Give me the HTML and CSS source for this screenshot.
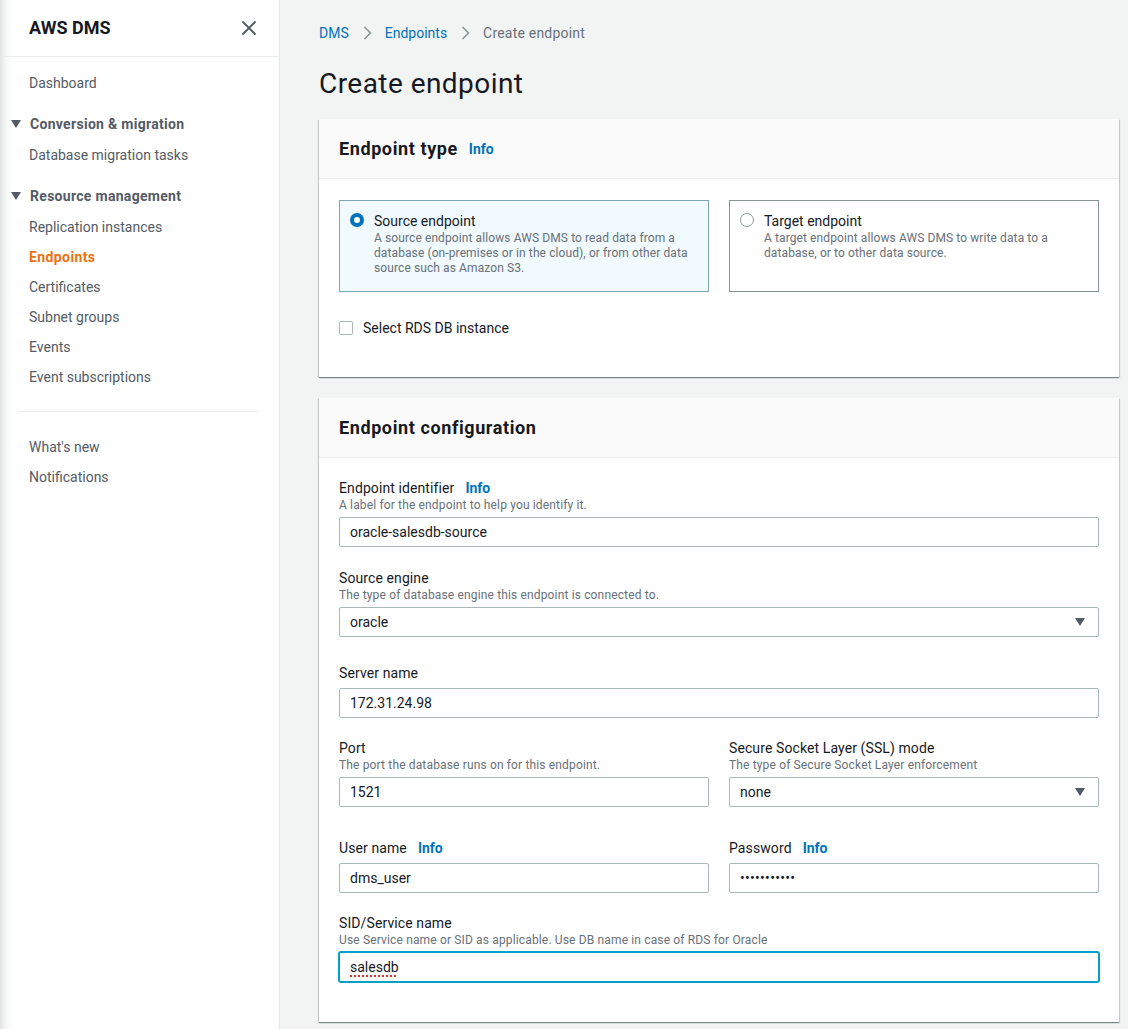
FILE: index.html
```html
<!DOCTYPE html>
<html lang="en">
<head>
<meta charset="utf-8">
<title>Create endpoint</title>
<link rel="stylesheet" href="styles.css">
</head>
<body>
<div class="app">
  <aside class="sidebar">
    <div class="side-head">
      <span class="brand">AWS DMS</span>
      <svg class="close" width="16" height="16" viewBox="0 0 16 16" aria-hidden="true"><path d="M2 2 L14 14 M14 2 L2 14" fill="none" stroke="#545b64" stroke-width="1.8" stroke-linecap="round"/></svg>
    </div>
    <nav class="nav">
      <a class="nav-item" href="#">Dashboard</a>
      <div class="nav-section">
        <div class="nav-heading"><span class="caret"></span>Conversion &amp; migration</div>
        <a class="nav-item" href="#">Database migration tasks</a>
      </div>
      <div class="nav-section">
        <div class="nav-heading"><span class="caret"></span>Resource management</div>
        <a class="nav-item" href="#">Replication instances</a>
        <a class="nav-item nav-item--active" href="#">Endpoints</a>
        <a class="nav-item" href="#">Certificates</a>
        <a class="nav-item" href="#">Subnet groups</a>
        <a class="nav-item" href="#">Events</a>
        <a class="nav-item" href="#">Event subscriptions</a>
      </div>
      <div class="nav-divider"></div>
      <a class="nav-item" href="#">What's new</a>
      <a class="nav-item" href="#">Notifications</a>
    </nav>
  </aside>

  <main class="main">
    <div class="breadcrumbs">
      <a class="crumb-link" href="#">DMS</a>
      <svg class="crumb-sep" width="16" height="16" viewBox="0 0 16 16" aria-hidden="true"><path d="M5.5 2 L11.5 8 L5.5 14" fill="none" stroke="#879596" stroke-width="1.6"/></svg>
      <a class="crumb-link" href="#">Endpoints</a>
      <svg class="crumb-sep" width="16" height="16" viewBox="0 0 16 16" aria-hidden="true"><path d="M5.5 2 L11.5 8 L5.5 14" fill="none" stroke="#879596" stroke-width="1.6"/></svg>
      <span class="crumb-current">Create endpoint</span>
    </div>

    <h1 class="page-title">Create endpoint</h1>

    <section class="panel">
      <header class="panel-head">
        <h2 class="panel-title">Endpoint type</h2>
        <a class="info" href="#">Info</a>
      </header>
      <div class="panel-body panel-body--type">
        <div class="tiles">
          <div class="tile tile--selected">
            <span class="radio radio--checked"></span>
            <div class="tile-text">
              <div class="tile-title">Source endpoint</div>
              <div class="tile-desc">A source endpoint allows AWS DMS to read data from a<br>database (on-premises or in the cloud), or from other data<br>source such as Amazon S3.</div>
            </div>
          </div>
          <div class="tile">
            <span class="radio"></span>
            <div class="tile-text">
              <div class="tile-title">Target endpoint</div>
              <div class="tile-desc">A target endpoint allows AWS DMS to write data to a<br>database, or to other data source.</div>
            </div>
          </div>
        </div>
        <div class="check-row">
          <span class="checkbox"></span>
          <span>Select RDS DB instance</span>
        </div>
      </div>
    </section>

    <section class="panel panel--config">
      <header class="panel-head">
        <h2 class="panel-title">Endpoint configuration</h2>
      </header>
      <div class="panel-body">
        <div class="field">
          <div class="label">Endpoint identifier <a class="info" href="#">Info</a></div>
          <div class="desc">A label for the endpoint to help you identify it.</div>
          <div class="control">oracle-salesdb-source</div>
        </div>

        <div class="field field--gap21">
          <div class="label">Source engine</div>
          <div class="desc">The type of database engine this endpoint is connected to.</div>
          <div class="control control--select">oracle<span class="arrow"></span></div>
        </div>

        <div class="field field--gap26">
          <div class="label">Server name</div>
          <div class="control">172.31.24.98</div>
        </div>

        <div class="field-row">
          <div class="field">
            <div class="label">Port</div>
            <div class="desc">The port the database runs on for this endpoint.</div>
            <div class="control">1521</div>
          </div>
          <div class="field">
            <div class="label">Secure Socket Layer (SSL) mode</div>
            <div class="desc">The type of Secure Socket Layer enforcement</div>
            <div class="control control--select">none<span class="arrow"></span></div>
          </div>
        </div>

        <div class="field-row field-row--gap31">
          <div class="field">
            <div class="label">User name <a class="info" href="#">Info</a></div>
            <div class="control">dms_user</div>
          </div>
          <div class="field">
            <div class="label">Password <a class="info" href="#">Info</a></div>
            <div class="control control--password">•••••••••••</div>
          </div>
        </div>

        <div class="field">
          <div class="label">SID/Service name</div>
          <div class="desc">Use Service name or SID as applicable. Use DB name in case of RDS for Oracle</div>
          <div class="control control--focused"><span class="misspelled">salesdb</span></div>
        </div>
      </div>
    </section>
  </main>
</div>
</body>
</html>
```

FILE: styles.css
```css
* { box-sizing: border-box; }

html, body {
  margin: 0;
  padding: 0;
}

body {
  font-family: Roboto, "Liberation Sans", Arial, sans-serif;
  font-size: 14px;
  line-height: 20px;
  color: #16191f;
  background: #f2f3f3;
}

.app {
  display: flex;
  min-height: 1029px;
}

/* ---------- Sidebar ---------- */
.sidebar {
  flex: 0 0 280px;
  width: 280px;
  background: linear-gradient(to right, #e3e5e5 0, #f6f7f7 6px, #ffffff 14px);
  border-right: 1px solid #e4e7e7;
}

.side-head {
  height: 57px;
  display: flex;
  align-items: center;
  justify-content: space-between;
  padding: 0 22px 0 29px;
  border-bottom: 1px solid #eaeded;
}

.brand {
  font-size: 18px;
  font-weight: 700;
  line-height: 24px;
  color: #16191f;
}

.close { display: block; }

.nav {
  padding-top: 11px;
}

.nav-item {
  display: block;
  padding: 5px 0 5px 29px;
  color: #545b64;
  text-decoration: none;
  font-size: 14px;
  line-height: 20px;
}

.nav-item--active {
  color: #ec7211;
  font-weight: 700;
  letter-spacing: 0.4px;
}

.nav-section {
  margin-top: 11px;
}

.nav-heading {
  display: flex;
  align-items: center;
  padding: 5px 0 6px 11px;
  font-weight: 700;
  color: #545b64;
  line-height: 20px;
  letter-spacing: 0.3px;
}

.caret {
  width: 0;
  height: 0;
  border-left: 5px solid transparent;
  border-right: 5px solid transparent;
  border-top: 8px solid #545b64;
  margin-right: 9px;
}

.nav-divider {
  height: 1px;
  background: #eaeded;
  margin: 19px 21px 20px 19px;
}

/* ---------- Main ---------- */
.main {
  flex: 1;
  padding: 23px 0 0 39px;
}

.breadcrumbs {
  display: flex;
  align-items: center;
  height: 20px;
  font-size: 14px;
}

.crumb-link {
  color: #0073bb;
  text-decoration: none;
}

.crumb-sep {
  margin: 0 10px;
  display: block;
}

.crumb-current {
  color: #687078;
  letter-spacing: 0.2px;
}

.page-title {
  margin: 23px 0 17px;
  font-size: 28px;
  line-height: 36px;
  font-weight: 400;
  color: #16191f;
  letter-spacing: 0.45px;
}

.panel {
  width: 800px;
  background: #ffffff;
  box-shadow: 0 1px 1px 0 rgba(0, 28, 36, 0.3), 1px 1px 1px 0 rgba(0, 28, 36, 0.15), -1px 1px 1px 0 rgba(0, 28, 36, 0.15);
}

.panel--config {
  margin-top: 21px;
}

.panel-head {
  display: flex;
  align-items: center;
  height: 60px;
  padding: 0 20px;
  background: #fafafa;
  border-bottom: 1px solid #eaeded;
}

.panel-title {
  margin: 0;
  font-size: 18px;
  line-height: 24px;
  font-weight: 700;
  color: #16191f;
  letter-spacing: 0.6px;
}

.info {
  color: #0073bb;
  font-weight: 700;
  font-size: 14px;
  letter-spacing: 0;
  text-decoration: none;
  margin-left: 11px;
}

.panel-body {
  padding: 20px 20px 40px;
}

.panel-body--type {
  padding: 21px 20px 39px;
}

/* tiles */
.tiles {
  display: grid;
  grid-template-columns: 1fr 1fr;
  column-gap: 20px;
}

.tile {
  display: flex;
  align-items: flex-start;
  gap: 10px;
  padding: 10px 10px 15px 10px;
  border: 1px solid #879596;
  background: #ffffff;
}

.tile--selected {
  border-color: #7fa6b4;
  background: #f1faff;
}

.radio {
  flex: 0 0 14px;
  width: 14px;
  height: 14px;
  margin-top: 2px;
  border-radius: 50%;
  border: 1px solid #8d9999;
  background: #ffffff;
}

.radio--checked {
  border: 4px solid #0073bb;
}

.tile-title {
  font-size: 14px;
  line-height: 20px;
  color: #16191f;
}

.tile-desc {
  font-size: 12px;
  line-height: 15px;
  color: #687078;
  letter-spacing: 0.1px;
}

.check-row {
  display: flex;
  align-items: center;
  gap: 10px;
  margin-top: 26px;
  line-height: 20px;
}

.checkbox {
  width: 14px;
  height: 14px;
  border: 1px solid #aab7b8;
  border-radius: 2px;
  background: #ffffff;
}

/* fields */
.field + .field,
.field + .field-row,
.field-row + .field,
.field-row + .field-row {
  margin-top: 20px;
}

.field-row .field { margin-top: 0; }

.field.field--gap21 { margin-top: 21px; }
.field.field--gap26 { margin-top: 26px; }
.field-row.field-row--gap31 { margin-top: 31px; }

.field-row {
  display: grid;
  grid-template-columns: 1fr 1fr;
  column-gap: 20px;
}

.label {
  display: flex;
  align-items: baseline;
  font-size: 14px;
  line-height: 20px;
  color: #16191f;
  letter-spacing: 0.1px;
}

.desc {
  font-size: 12px;
  line-height: 15px;
  color: #687078;
  letter-spacing: 0.15px;
}

.control {
  display: flex;
  align-items: center;
  height: 30px;
  margin-top: 5px;
  padding: 0 10px;
  border: 1px solid #aab7b8;
  border-radius: 2px;
  background: #ffffff;
  font-size: 14px;
  color: #16191f;
}

.desc + .control {
  margin-top: 4px;
}

.control--select .arrow {
  margin-left: auto;
  margin-right: 3px;
  width: 0;
  height: 0;
  border-left: 5px solid transparent;
  border-right: 5px solid transparent;
  border-top: 8px solid #545b64;
}

.control--password {
  letter-spacing: 0.3px;
  font-size: 14px;
}

.control--focused {
  border-color: #00a1c9;
  box-shadow: 0 0 0 1px #00a1c9;
}

.misspelled {
  text-decoration: underline dotted #e0312b;
  text-decoration-thickness: 2px;
  text-underline-offset: 3px;
}
```
